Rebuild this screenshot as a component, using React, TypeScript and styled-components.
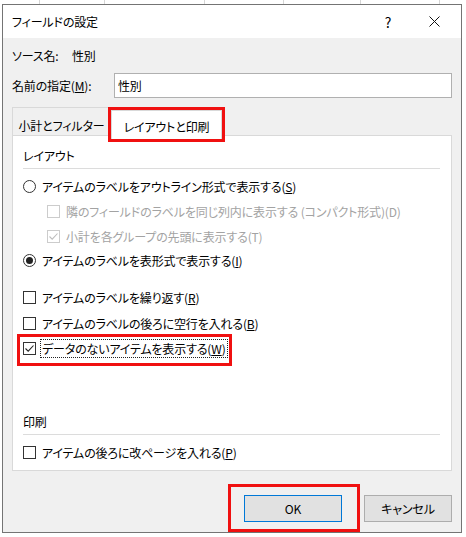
import React from 'react';
import styled, { createGlobalStyle } from 'styled-components';

const GlobalStyle = createGlobalStyle`
  html, body {
    margin: 0;
    padding: 0;
    background: #ffffff;
  }
  body {
    font-family: "Noto Sans CJK JP", "Noto Sans", sans-serif;
    font-size: 12px;
    letter-spacing: -0.15px;
    color: #000;
    font-feature-settings: "palt";
  }
`;

type OptionProps = {
    label: string;
    mnemonic?: string;
    kind: 'check' | 'radio';
    checked?: boolean;
    disabled?: boolean;
    indent?: boolean;
    focused?: boolean;
    mt?: number;
};

const Option = ({label, mnemonic, kind, checked, disabled, indent, focused, mt = 0}: OptionProps) => (
    <Row $mt={mt} $indent={indent} $disabled={disabled}>
        {kind === 'check' ? (
            <CheckBox $disabled={disabled}>
                {checked && (
                    <svg width="11" height="11" viewBox="0 0 11 11">
                        <polyline points="1.5,5.5 4.2,8.2 9.5,2.5" fill="none"
                                  stroke={disabled ? '#bdbdbd' : '#222'} strokeWidth="1.1"/>
                    </svg>
                )}
            </CheckBox>
        ) : (
            <RadioCircle>{checked && <RadioDot/>}</RadioCircle>
        )}
        <Label $focused={focused}>
            {label}
            {mnemonic && (disabled ? `(${mnemonic})` : <>(<u>{mnemonic}</u>)</>)}
        </Label>
    </Row>
);

const App = () => {
    return (
        <>
            <GlobalStyle/>
            <SheetStrip>
                {[40, 65, 100, 79, 77, 79].map((w, i) => <SheetCell key={i} $w={w}/>)}
            </SheetStrip>
            <Dialog>
                <TitleBar>
                    <Title>フィールドの設定</Title>
                    <TitleButton>?</TitleButton>
                    <TitleButton $close>
                        <svg width="11" height="11" viewBox="0 0 11 11">
                            <path d="M0.5 0.5 L10.5 10.5 M10.5 0.5 L0.5 10.5" stroke="#111" strokeWidth="1"/>
                        </svg>
                    </TitleButton>
                </TitleBar>

                <Body>
                    <SourceRow>
                        <SourceLabel>ソース名:</SourceLabel>
                        <span>性別</span>
                    </SourceRow>
                    <NameRow>
                        <NameLabel>名前の指定(<u>M</u>):</NameLabel>
                        <NameInput readOnly value="性別"/>
                    </NameRow>

                    <TabsRow>
                        <Tab>小計とフィルター</Tab>
                        <Tab $active>レイアウトと印刷</Tab>
                    </TabsRow>

                    <Panel>
                        <SectionHeader $mt={10}>レイアウト</SectionHeader>
                        <Option kind="radio" label="アイテムのラベルをアウトライン形式で表示する" mnemonic="S" mt={7}/>
                        <Option kind="check" indent disabled
                                label="隣のフィールドのラベルを同じ列内に表示する (コンパクト形式)" mnemonic="D" mt={5}/>
                        <Option kind="check" indent disabled checked
                                label="小計を各グループの先頭に表示する" mnemonic="T" mt={5}/>
                        <Option kind="radio" checked label="アイテムのラベルを表形式で表示する" mnemonic="I" mt={4}/>
                        <Option kind="check" label="アイテムのラベルを繰り返す" mnemonic="R" mt={17}/>
                        <Option kind="check" label="アイテムのラベルの後ろに空行を入れる" mnemonic="B" mt={6}/>
                        <Marked $margin="1px 0 -8px -6px" $pad="1px 1px 5px 3px">
                            <Option kind="check" checked focused label="データのないアイテムを表示する" mnemonic="W"/>
                        </Marked>

                        <SectionHeader $mt={54}>印刷</SectionHeader>
                        <Option kind="check" label="アイテムの後ろに改ページを入れる" mnemonic="P" mt={7}/>
                    </Panel>

                    <Footer>
                        <Marked $margin="0" $pad="8px 15px 7px 13px">
                            <Button $primary $w={98}>OK</Button>
                        </Marked>
                        <Button $w={88} style={{marginLeft: 4, marginTop: 11}}>キャンセル</Button>
                    </Footer>
                </Body>
            </Dialog>
        </>
    );
};

export default App;

const SheetStrip = styled.div`
  display: flex;
  height: 4px;
`;

const SheetCell = styled.div<{ $w: number }>`
  width: ${p => p.$w}px;
  flex-shrink: 0;
  border-right: 1px solid #d6d6d6;
  box-sizing: border-box;
`;

const Dialog = styled.div`
  margin-left: 2px;
  width: 460px;
  height: 529px;
  box-sizing: border-box;
  border: 1px solid #747474;
  background: #f0f0f0;
  display: flex;
  flex-direction: column;
`;

const TitleBar = styled.div`
  height: 33px;
  flex-shrink: 0;
  background: #ffffff;
  display: flex;
  align-items: center;
  padding-left: 9px;
`;

const Title = styled.div`
  flex: 1;
`;

const TitleButton = styled.div<{ $close?: boolean }>`
  width: 46px;
  height: 33px;
  display: flex;
  align-items: center;
  justify-content: center;
  font-size: 14px;
  margin-right: ${p => p.$close ? '4px' : '0'};
`;

const Body = styled.div`
  flex: 1;
  display: flex;
  flex-direction: column;
  padding: 7px 9px 0 9px;
`;

const SourceRow = styled.div`
  display: flex;
  align-items: center;
  height: 20px;
`;

const SourceLabel = styled.span`
  width: 60px;
`;

const NameRow = styled.div`
  display: flex;
  align-items: center;
  height: 25px;
  margin-top: 8px;
`;

const NameLabel = styled.span`
  width: 102px;
  flex-shrink: 0;
`;

const NameInput = styled.input`
  flex: 1;
  height: 25px;
  box-sizing: border-box;
  border: 1px solid #b0b0b0;
  background: #fff;
  padding: 0 3px;
  font: inherit;
  letter-spacing: inherit;
  outline: none;
`;

const TabsRow = styled.div`
  display: flex;
  align-items: flex-end;
  height: 30px;
  margin-top: 7px;
`;

const Tab = styled.div<{ $active?: boolean }>`
  box-sizing: border-box;
  display: flex;
  align-items: center;
  justify-content: center;
  width: ${p => p.$active ? 111 : 99}px;
  height: ${p => p.$active ? 29 : 28}px;
  padding-top: ${p => p.$active ? 2 : 8}px;
  margin-bottom: ${p => p.$active ? -4 : 0}px;
  border: 1px solid #d9d9d9;
  border-bottom: none;
  background: ${p => p.$active ? '#ffffff' : '#f0f0f0'};
  position: relative;
  z-index: ${p => p.$active ? 1 : 0};
  outline: ${p => p.$active ? '3px solid #f01010' : 'none'};
`;

const Panel = styled.div`
  height: 336px;
  box-sizing: border-box;
  background: #ffffff;
  border: 1px solid #d9d9d9;
  padding: 0 11px 0 10px;
  display: flex;
  flex-direction: column;
`;

const SectionHeader = styled.div<{ $mt: number }>`
  margin-top: ${p => p.$mt}px;
  height: 22px;
  line-height: 20px;
  border-bottom: 1px solid #dcdcdc;
`;

const Row = styled.div<{ $mt: number; $indent?: boolean; $disabled?: boolean }>`
  display: flex;
  align-items: center;
  height: 20px;
  margin-top: ${p => p.$mt}px;
  padding-left: ${p => p.$indent ? 24 : 0}px;
  color: ${p => p.$disabled ? '#a3a3a3' : '#000'};
`;

const CheckBox = styled.div<{ $disabled?: boolean }>`
  width: 13px;
  height: 13px;
  box-sizing: border-box;
  border: 1px solid ${p => p.$disabled ? '#cccccc' : '#333333'};
  background: #fff;
  display: flex;
  align-items: center;
  justify-content: center;
  flex-shrink: 0;
`;

const RadioCircle = styled.div`
  width: 13px;
  height: 13px;
  box-sizing: border-box;
  border: 1px solid #333333;
  border-radius: 50%;
  display: flex;
  align-items: center;
  justify-content: center;
  flex-shrink: 0;
`;

const RadioDot = styled.div`
  width: 7px;
  height: 7px;
  border-radius: 50%;
  background: #222;
`;

const Label = styled.span<{ $focused?: boolean }>`
  margin-left: 4px;
  padding: 0 1px;
  line-height: 17px;
  border: 1px dotted ${p => p.$focused ? '#222' : 'transparent'};
  white-space: nowrap;
`;

const Marked = styled.div<{ $margin: string; $pad: string }>`
  display: flex;
  align-self: flex-start;
  border: 3px solid #f01010;
  margin: ${p => p.$margin};
  padding: ${p => p.$pad};
`;

const Footer = styled.div`
  display: flex;
  justify-content: flex-end;
  align-items: flex-start;
  margin-top: 13px;
`;

const Button = styled.div<{ $primary?: boolean; $w: number }>`
  width: ${p => p.$w}px;
  height: 27px;
  box-sizing: border-box;
  display: flex;
  align-items: center;
  justify-content: center;
  background: #e1e1e1;
  border: 1px solid ${p => p.$primary ? '#0078d7' : '#adadad'};
`;
